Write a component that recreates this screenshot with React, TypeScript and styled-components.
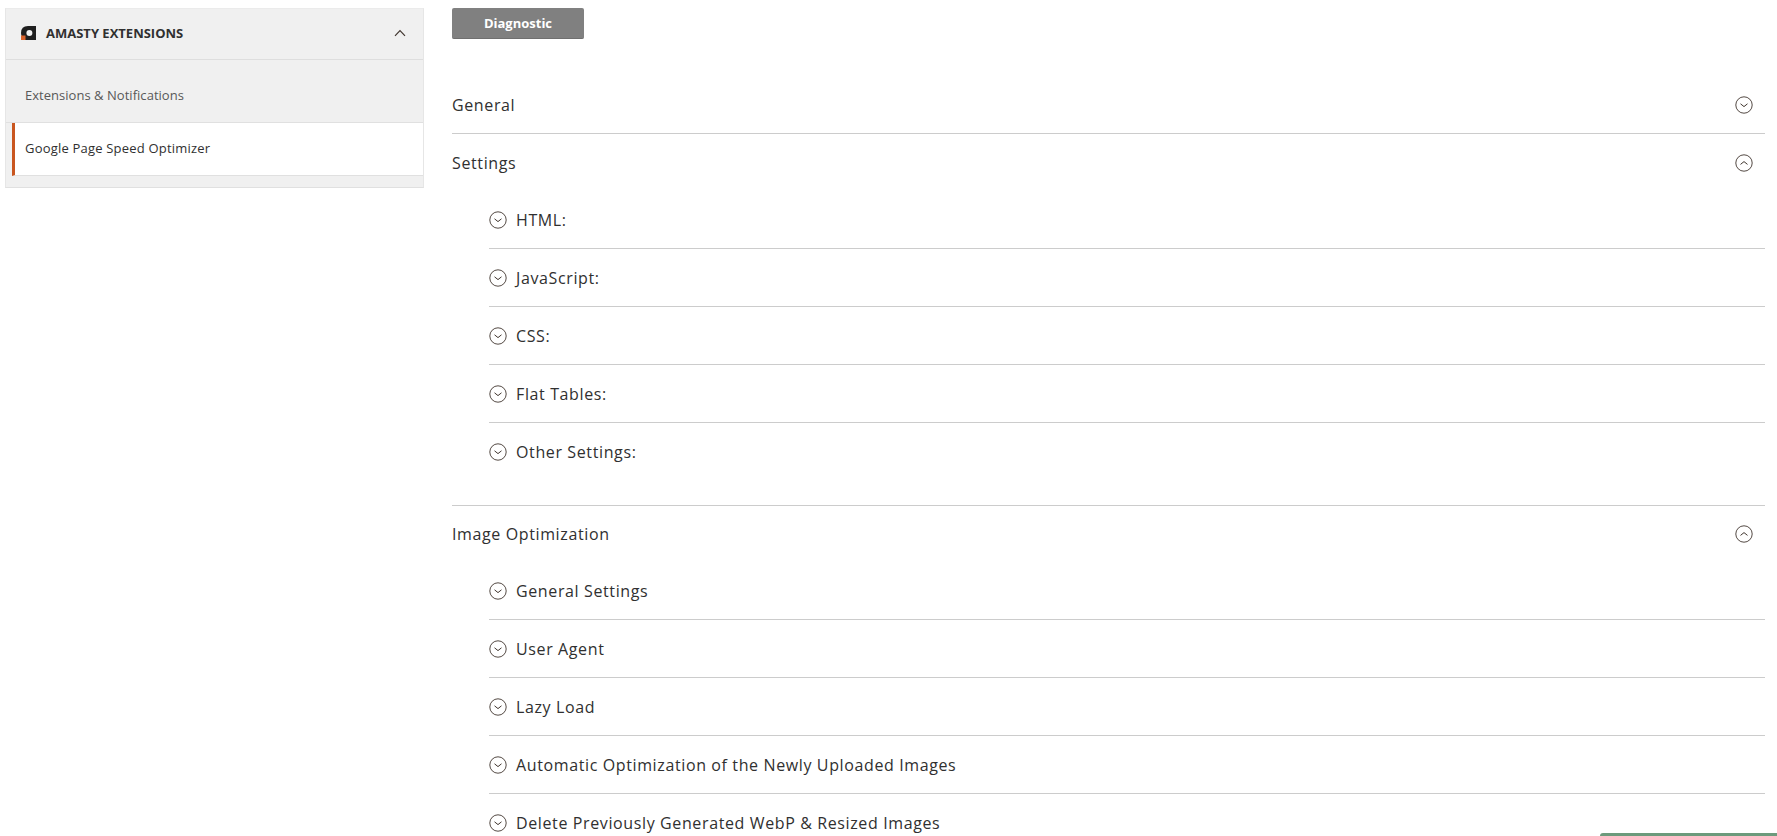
import React from "react";
import styled, { createGlobalStyle } from "styled-components";

const GlobalStyle = createGlobalStyle`
  html, body {
    margin: 0;
    padding: 0;
    height: 836px;
    overflow: hidden;
    background: #fff;
    font-family: "Open Sans", "Noto Sans", sans-serif;
    color: #303030;
  }
`;

const Page = styled.div`
  display: flex;
  align-items: flex-start;
  height: 836px;
  padding: 8px 12px 0 5px;
  box-sizing: border-box;
  position: relative;
  overflow: hidden;
`;

const Sidebar = styled.nav`
  flex: 0 0 419px;
  background: #f0f0f0;
  border-top: 1px solid #ebebeb;
  border-bottom: 1px solid #e0e0e0;
  border-left: 1px solid #e6e6e6;
  border-right: 1px solid #e6e6e6;
  box-sizing: border-box;
  height: 180px;
`;

const SidebarHead = styled.div`
  display: flex;
  align-items: center;
  height: 51px;
  padding: 0 17px 2px 15px;
  box-sizing: border-box;
  border-bottom: 1px solid #dedede;
  font-size: 13px;
  font-weight: 700;
  color: #303030;
`;

const HeadTitle = styled.span`
  margin-left: 10px;
  flex: 1;
`;

const SubItem = styled.div<{ $active?: boolean }>`
  display: flex;
  align-items: center;
  margin-left: ${(p) => (p.$active ? "6px" : "0")};
  padding-left: ${(p) => (p.$active ? "10px" : "19px")};
  padding-top: ${(p) => (p.$active ? "0" : "7px")};
  padding-bottom: ${(p) => (p.$active ? "2px" : "0")};
  height: ${(p) => (p.$active ? "53px" : "63px")};
  font-size: 13px;
  letter-spacing: ${(p) => (p.$active ? "0.2px" : "0.03px")};
  box-sizing: border-box;
  background: ${(p) => (p.$active ? "#fff" : "transparent")};
  color: ${(p) => (p.$active ? "#303030" : "#585858")};
  border-left: ${(p) => (p.$active ? "3px solid #c9561f" : "none")};
  border-bottom: 1px solid #e0e0e0;
`;

const Main = styled.main`
  flex: 1;
  margin-left: 28px;
  min-width: 0;
`;

const DiagnosticButton = styled.button`
  display: block;
  width: 132px;
  height: 31px;
  padding: 0;
  border: none;
  border-bottom: 1px solid #6f6f6f;
  border-radius: 2px;
  background: #808080;
  color: #fff;
  font-family: inherit;
  font-size: 13px;
  font-weight: 700;
`;

const Section = styled.section`
  margin-top: 0;
`;

const SectionHead = styled.div<{ $height: number; $line?: boolean; $top?: number }>`
  display: flex;
  align-items: center;
  justify-content: space-between;
  height: ${(p) => p.$height}px;
  padding: ${(p) => p.$top ?? 0}px 12px 0 0;
  font-size: 16px;
  font-weight: 500;
  letter-spacing: 0.62px;
  color: #303030;
  box-sizing: border-box;
  border-bottom: ${(p) => (p.$line ? "1px solid #cccccc" : "none")};
`;

const SubList = styled.div<{ $line?: boolean; $pad?: number }>`
  padding-left: 37px;
  padding-bottom: ${(p) => p.$pad ?? 0}px;
  border-bottom: ${(p) => (p.$line ? "1px solid #cccccc" : "none")};
`;

const SubRow = styled.div<{ $line?: boolean }>`
  display: flex;
  align-items: center;
  gap: 9px;
  height: 58px;
  box-sizing: border-box;
  font-size: 16px;
  font-weight: 500;
  letter-spacing: 0.62px;
  color: #303030;
  border-bottom: ${(p) => (p.$line ? "1px solid #cccccc" : "none")};
`;

const GreenStrip = styled.div`
  position: absolute;
  right: 0;
  bottom: 0;
  width: 177px;
  height: 3px;
  background: #6c9a7c;
  border-top-left-radius: 3px;
`;

const Circle = ({ up }: { up?: boolean }) => (
  <svg width="18" height="18" viewBox="0 0 18 18" fill="none" stroke="#41362f">
    <circle cx="9" cy="9" r="8.2" strokeWidth="0.9" />
    <path
      d={up ? "M5.5 10.4 L9 7.6 L12.5 10.4" : "M5.5 7.8 L9 10.6 L12.5 7.8"}
      strokeWidth="1"
    />
  </svg>
);

const AmastyLogo = () => (
  <svg width="15" height="14" viewBox="0 0 15 14">
    <path d="M7 0 H15 V14 H4 L1 11 Q0 9 0 7 Q0 0 7 0 Z" fill="#1f1f1f" />
    <circle cx="8.4" cy="7" r="3" fill="#f0f0f0" />
    <path d="M0 9.5 H4.5 V14 H0 Z" fill="#d9622b" />
  </svg>
);

const ChevronUp = () => (
  <svg width="12" height="8" viewBox="0 0 12 8" fill="none" stroke="#41362f" strokeWidth="1.2">
    <path d="M1 6.8 L6 1.6 L11 6.8" />
  </svg>
);

const settingsRows = ["HTML:", "JavaScript:", "CSS:", "Flat Tables:", "Other Settings:"];
const imageRows = [
  "General Settings",
  "User Agent",
  "Lazy Load",
  "Automatic Optimization of the Newly Uploaded Images",
  "Delete Previously Generated WebP & Resized Images",
];

export default function App() {
  return (
    <>
      <GlobalStyle />
      <Page>
        <Sidebar>
          <SidebarHead>
            <AmastyLogo />
            <HeadTitle>AMASTY EXTENSIONS</HeadTitle>
            <ChevronUp />
          </SidebarHead>
          <SubItem>Extensions &amp; Notifications</SubItem>
          <SubItem $active>Google Page Speed Optimizer</SubItem>
        </Sidebar>
        <Main>
          <DiagnosticButton>Diagnostic</DiagnosticButton>
          <Section>
            <SectionHead $height={95} $line $top={37}>
              General
              <Circle />
            </SectionHead>
            <SectionHead $height={57}>
              Settings
              <Circle up />
            </SectionHead>
            <SubList $line $pad={24}>
              {settingsRows.map((row, i) => (
                <SubRow key={row} $line={i < settingsRows.length - 1}>
                  <Circle />
                  {row}
                </SubRow>
              ))}
            </SubList>
            <SectionHead $height={56}>
              Image Optimization
              <Circle up />
            </SectionHead>
            <SubList>
              {imageRows.map((row, i) => (
                <SubRow key={row} $line={i < imageRows.length - 1}>
                  <Circle />
                  {row}
                </SubRow>
              ))}
            </SubList>
          </Section>
        </Main>
        <GreenStrip />
      </Page>
    </>
  );
}
